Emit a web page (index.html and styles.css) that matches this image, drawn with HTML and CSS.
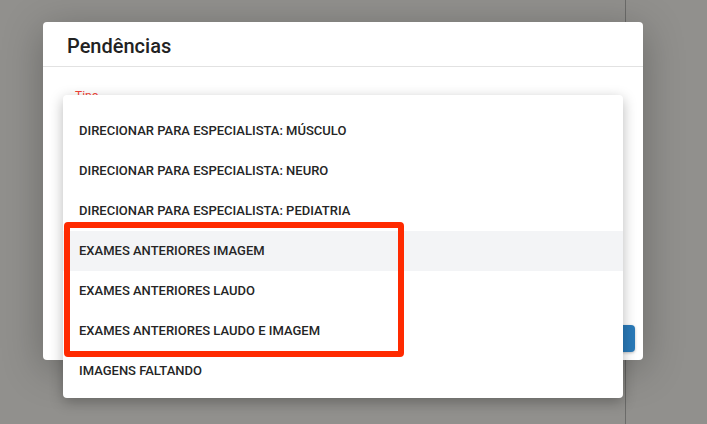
FILE: index.html
```html
<!DOCTYPE html>
<html lang="pt">
<head>
<meta charset="utf-8">
<link rel="stylesheet" href="styles.css">
</head>
<body>
<div class="page">
  <div class="modal">
    <div class="modal-header">Pendências</div>
    <div class="modal-body">
      <div class="field">
        <span class="field-label">Tipo</span>
        <div class="field-line"></div>
      </div>
    </div>
    <div class="modal-footer">
      <button class="btn-primary">Salvar</button>
    </div>
  </div>

  <ul class="menu">
    <li class="menu-item">DIRECIONAR PARA ESPECIALISTA: MÚSCULO</li>
    <li class="menu-item">DIRECIONAR PARA ESPECIALISTA: NEURO</li>
    <li class="menu-item">DIRECIONAR PARA ESPECIALISTA: PEDIATRIA</li>
    <li class="menu-item is-hover">EXAMES ANTERIORES IMAGEM</li>
    <li class="menu-item">EXAMES ANTERIORES LAUDO</li>
    <li class="menu-item">EXAMES ANTERIORES LAUDO E IMAGEM</li>
    <li class="menu-item">IMAGENS FALTANDO</li>
  </ul>

  <div class="highlight-box"></div>
</div>
</body>
</html>
```

FILE: styles.css
```css
* { box-sizing: border-box; }

html, body {
  margin: 0;
  padding: 0;
  width: 707px;
  height: 424px;
  overflow: hidden;
}

body {
  font-family: Roboto, "Liberation Sans", Arial, sans-serif;
  background:
    linear-gradient(to right, transparent 625px, #6b6b69 625px, #6b6b69 626px, transparent 626px),
    #91908d;
}

.page {
  position: relative;
  width: 707px;
  height: 424px;
  padding: 22px 0 0 43px;
}

.modal {
  width: 600px;
  height: 338px;
  background: #fff;
  border-radius: 4px;
  box-shadow: 0 8px 40px rgba(0, 0, 0, 0.28);
  display: flex;
  flex-direction: column;
}

.modal-header {
  height: 45px;
  padding: 12px 0 0 24px;
  font-size: 20px;
  font-weight: 500;
  color: #222;
  border-bottom: 1px solid #e2e2e2;
  line-height: 24px;
}

.modal-body {
  flex: 1;
  padding: 22px 32px 0 32px;
}

.field {
  position: relative;
}

.field-label {
  display: block;
  font-size: 12px;
  color: #f44336;
  line-height: 14px;
}

.field-line {
  margin-top: -2px;
  border-bottom: 1px dotted #cfcfcf;
}

.modal-footer {
  display: flex;
  justify-content: flex-end;
  padding: 0 8px 8px 0;
}

.btn-primary {
  width: 90px;
  height: 27px;
  border: none;
  border-radius: 4px;
  background: #2a7ab8;
  color: #fff;
  font-family: inherit;
  font-size: 13px;
  font-weight: 500;
  box-shadow: 0 1px 3px rgba(0, 0, 0, 0.25);
}

.menu {
  position: absolute;
  left: 63px;
  top: 95px;
  width: 560px;
  height: 303px;
  margin: 0;
  padding: 16px 0 0 0;
  list-style: none;
  background: #fff;
  border-radius: 4px;
  box-shadow: 0 4px 14px rgba(0, 0, 0, 0.28);
}

.menu-item {
  height: 40px;
  line-height: 40px;
  padding-left: 16px;
  font-size: 13px;
  font-weight: 500;
  color: #252525;
}

.menu-item.is-hover {
  background: #f3f4f6;
}

.highlight-box {
  position: absolute;
  left: 64px;
  top: 222px;
  width: 340px;
  height: 135px;
  border: 6px solid #ff2a00;
  border-radius: 4px;
}
```
